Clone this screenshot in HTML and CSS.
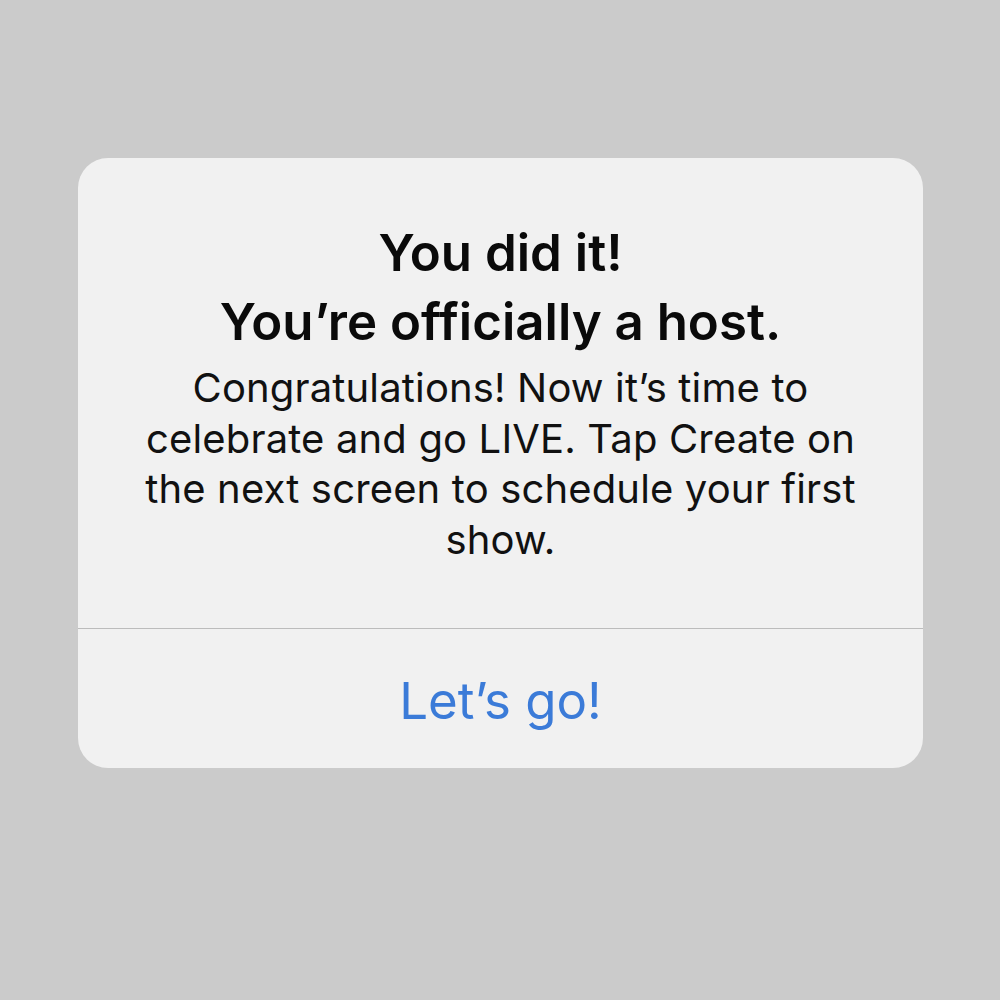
FILE: index.html
```html
<!DOCTYPE html>
<html>
<head>
<meta charset="utf-8">
<link rel="stylesheet" href="styles.css">
</head>
<body>
<div class="page">
  <div class="alert">
    <div class="content">
      <h1 class="title">You did it!<br>You’re officially a host.</h1>
      <p class="message">Congratulations! Now it’s time to celebrate and go LIVE. Tap Create on the next screen to schedule your first show.</p>
    </div>
    <div class="actions">
      <button class="action">Let’s go!</button>
    </div>
  </div>
</div>
</body>
</html>
```
FILE: styles.css
```css
html, body {
  margin: 0;
  padding: 0;
  background: #cbcbcb;
  width: 1000px;
  height: 1000px;
  overflow: hidden;
}
.page {
  padding: 158px 0 0 78px;
}
.alert {
  width: 845px;
  height: 610px;
  background: #f1f1f1;
  border-radius: 30px;
  display: flex;
  flex-direction: column;
  overflow: hidden;
  font-family: Inter, "Noto Sans", sans-serif;
}
.content {
  height: 471px;
  box-sizing: border-box;
  padding: 60px 40px 0;
  border-bottom: 1.5px solid #bcbcbc;
  text-align: center;
}
.title {
  margin: 0;
  font-size: 51px;
  line-height: 69px;
  font-weight: 600;
  color: #0a0a0a;
  letter-spacing: 0;
}
.message {
  margin: 7px 0 0;
  font-size: 40px;
  line-height: 50.7px;
  font-weight: 400;
  color: #111;
  letter-spacing: 0.15px;
}
.actions {
  flex: 1;
  display: flex;
  align-items: center;
  justify-content: center;
}
.action {
  border: 0;
  background: none;
  font-family: Inter, "Noto Sans", sans-serif;
  font-size: 51px;
  font-weight: 400;
  color: #3b7bd8;
  padding: 0;
  margin-top: 4px;
}
```
